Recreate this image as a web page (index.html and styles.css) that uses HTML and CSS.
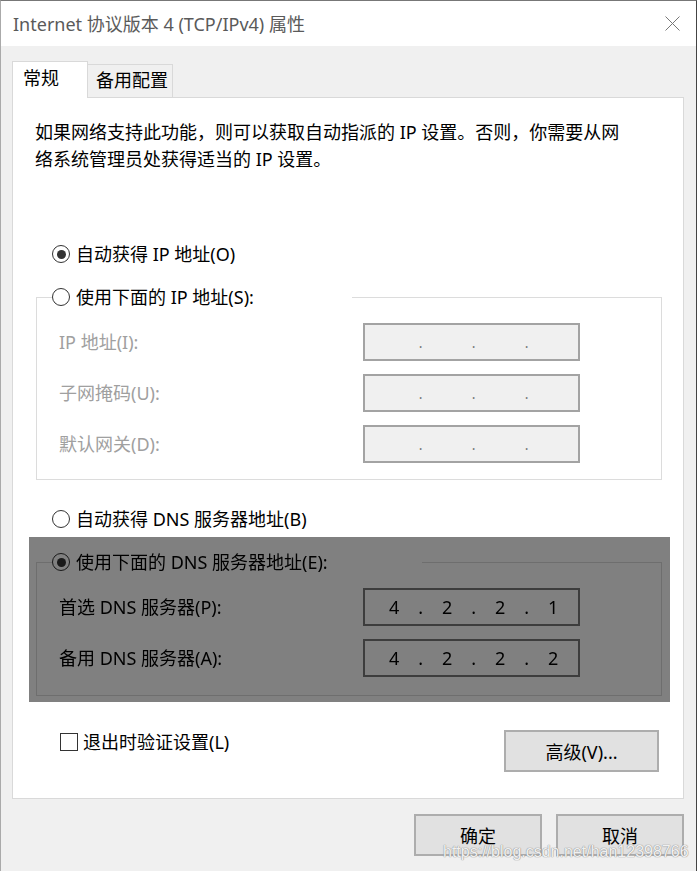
FILE: index.html
```html
<!DOCTYPE html>
<html lang="zh-CN">
<head>
  <meta charset="UTF-8" />
  <meta name="viewport" content="width=device-width, initial-scale=1.0"/>
  <title>Internet 协议版本 4 (TCP/IPv4) 属性</title>
  <link rel="stylesheet" href="styles.css">
</head>
<body>

  <div class="window">
    <div class="titlebar">
      <span class="title">Internet 协议版本 4 (TCP/IPv4) 属性</span>
      <svg class="close" width="15" height="15" viewBox="0 0 15 15">
        <path d="M0.5 0.5 L14.5 14.5 M14.5 0.5 L0.5 14.5" stroke="#777" stroke-width="1" fill="none"/>
      </svg>
    </div>

    <div class="tabs">
      <div class="tab active">常规</div>
      <div class="tab">备用配置</div>
    </div>

    <div class="panel">
      <p class="intro">如果网络支持此功能，则可以获取自动指派的 IP 设置。否则，你需要从网<br>络系统管理员处获得适当的 IP 设置。</p>

      <label class="option option-top"><span class="radio checked"></span>自动获得 IP 地址(O)</label>

      <fieldset class="group group-ip">
        <legend class="option legend-ip"><span class="radio"></span>使用下面的 IP 地址(S):</legend>
        <div class="rows rows-ip">
          <div class="row disabled">
            <span class="row-label">IP 地址(I):</span>
            <div class="ip-box"><span></span><span>.</span><span></span><span>.</span><span></span><span>.</span><span></span></div>
          </div>
          <div class="row disabled">
            <span class="row-label">子网掩码(U):</span>
            <div class="ip-box"><span></span><span>.</span><span></span><span>.</span><span></span><span>.</span><span></span></div>
          </div>
          <div class="row disabled">
            <span class="row-label">默认网关(D):</span>
            <div class="ip-box"><span></span><span>.</span><span></span><span>.</span><span></span><span>.</span><span></span></div>
          </div>
        </div>
      </fieldset>

      <label class="option option-dns"><span class="radio"></span>自动获得 DNS 服务器地址(B)</label>

      <div class="highlight">
        <fieldset class="group group-dns">
          <legend class="option legend-dns"><span class="radio checked"></span>使用下面的 DNS 服务器地址(E):</legend>
          <div class="rows rows-dns">
            <div class="row">
              <span class="row-label">首选 DNS 服务器(P):</span>
              <div class="ip-box"><span>4</span><span>.</span><span>2</span><span>.</span><span>2</span><span>.</span><span>1</span></div>
            </div>
            <div class="row">
              <span class="row-label">备用 DNS 服务器(A):</span>
              <div class="ip-box"><span>4</span><span>.</span><span>2</span><span>.</span><span>2</span><span>.</span><span>2</span></div>
            </div>
          </div>
        </fieldset>
      </div>

      <div class="panel-footer">
        <label class="option"><span class="checkbox"></span>退出时验证设置(L)</label>
        <button type="button" class="btn btn-advanced">高级(V)...</button>
      </div>
    </div>

    <div class="dialog-buttons">
      <button type="button" class="btn btn-dialog">确定</button>
      <button type="button" class="btn btn-dialog">取消</button>
    </div>

    <div class="watermark">https://blog.csdn.net/han12398766</div>
  </div>

</body>
</html>
```

FILE: styles.css
```css
body {
  margin: 0;
  font-family: "Noto Sans", "Noto Sans CJK SC", sans-serif;
  font-size: 18px;
  color: #000;
}

.window {
  position: relative;
  width: 697px;
  height: 871px;
  box-sizing: border-box;
  background: #f0f0f0;
  border-top: 1px solid #777;
  border-left: 1px solid #aaa;
  border-right: 1px solid #444;
  overflow: hidden;
}

.titlebar {
  height: 45px;
  background: #fff;
  display: flex;
  align-items: center;
  justify-content: space-between;
  padding: 0 16px 0 12px;
}

.title {
  color: #5a5a5a;
  font-size: 18px;
  line-height: 24px;
}

.close {
  display: block;
  margin-bottom: 1px;
}

.tabs {
  display: flex;
  align-items: flex-end;
  height: 36px;
  margin-top: 15px;
  padding-left: 11px;
}

.tab {
  box-sizing: border-box;
  height: 33px;
  width: 85px;
  padding: 3px 0 0 8px;
  line-height: 24px;
  border: 1px solid #d9d9d9;
  border-left: none;
  border-bottom: none;
  background: #f0f0f0;
}

.tab.active {
  position: relative;
  z-index: 1;
  height: 37px;
  width: 76px;
  margin-bottom: -1px;
  padding: 4px 0 0 10px;
  border-left: 1px solid #d9d9d9;
  background: #fff;
}

.panel {
  margin: 0 12px 0 11px;
  padding: 21px 0 26px;
  background: #fff;
  border: 1px solid #d9d9d9;
}

.intro {
  margin: 0 0 0 22px;
  line-height: 27px;
  white-space: nowrap;
}

.option {
  display: flex;
  align-items: center;
  height: 24px;
  line-height: 24px;
  white-space: nowrap;
}

.option-top {
  margin: 69px 0 0 39px;
}

.option-dns {
  margin: 27px 0 0 39px;
}

.radio {
  box-sizing: border-box;
  width: 18px;
  height: 18px;
  border: 1.5px solid #333;
  border-radius: 50%;
  background: #fff;
  margin-right: 6px;
  display: flex;
  align-items: center;
  justify-content: center;
  flex-shrink: 0;
}

.radio.checked::after {
  content: "";
  width: 9px;
  height: 9px;
  border-radius: 50%;
  background: #333;
}

.checkbox {
  box-sizing: border-box;
  width: 18px;
  height: 18px;
  border: 1.5px solid #333;
  background: #fff;
  margin-right: 5px;
  flex-shrink: 0;
}

.group {
  margin: 0;
  padding: 0;
  min-width: 0;
  border: 1px solid #dcdcdc;
}

.group legend {
  padding: 0;
  margin-left: 15px;
  box-sizing: border-box;
}

.group-ip {
  margin: 19px 21px 0 23px;
}

.legend-ip {
  width: 300px;
}

.legend-dns {
  width: 370px;
}

.rows {
  display: flex;
  flex-direction: column;
  gap: 13px;
  padding: 14px 0 0 22px;
}

.rows-ip {
  padding-bottom: 16px;
}

.rows-dns {
  padding-bottom: 18px;
}

.row {
  display: flex;
  align-items: center;
  height: 38px;
}

.row-label {
  width: 304px;
  line-height: 24px;
  white-space: nowrap;
}

.ip-box {
  box-sizing: border-box;
  width: 217px;
  height: 38px;
  border: 2px solid #7a7a7a;
  background: #fff;
  display: flex;
  align-items: center;
  padding-left: 16px;
}

.ip-box span {
  width: 26.5px;
  text-align: center;
  line-height: 24px;
}

.row.disabled .row-label {
  color: #a0a0a0;
}

.row.disabled .ip-box {
  border-color: #a3a3a3;
  background: #f0f0f0;
  color: #777;
  font-size: 14px;
}

.row.disabled .ip-box span {
  padding-top: 2px;
}

.highlight {
  margin: 6px 13px 0 16px;
  padding: 13px 8px 6px 7px;
  background: #fff;
  filter: brightness(0.5);
}

.panel-footer {
  display: flex;
  justify-content: space-between;
  align-items: flex-start;
  margin: 28px 24px 0 47px;
}

.btn {
  box-sizing: border-box;
  height: 42px;
  border: 2px solid #adadad;
  background: #e1e1e1;
  font-family: "Noto Sans", "Noto Sans CJK SC", sans-serif;
  font-size: 18px;
  color: #000;
  padding: 0;
}

.btn-advanced {
  width: 155px;
}

.dialog-buttons {
  display: flex;
  justify-content: flex-end;
  gap: 14px;
  margin-top: 15px;
  padding-right: 12px;
}

.btn-dialog {
  width: 128px;
}

.watermark {
  position: absolute;
  left: 442px;
  top: 842px;
  font-family: "Liberation Sans", sans-serif;
  font-size: 16px;
  color: rgba(255, 255, 255, 0.9);
  text-shadow: 0 0 1px #8a8a8a, 0 0 1px #8a8a8a;
  white-space: nowrap;
}
```
